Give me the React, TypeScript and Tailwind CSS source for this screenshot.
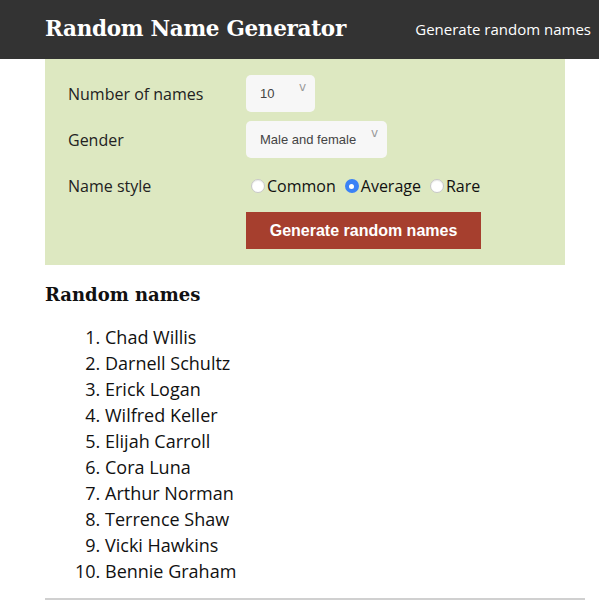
import React from 'react';

const NAMES = [
  'Chad Willis',
  'Darnell Schultz',
  'Erick Logan',
  'Wilfred Keller',
  'Elijah Carroll',
  'Cora Luna',
  'Arthur Norman',
  'Terrence Shaw',
  'Vicki Hawkins',
  'Bennie Graham',
];

const Select = ({ value, width }: { value: string; width: string }) => (
  <div className={`relative h-[37px] ${width} rounded-[5px] bg-[#f7f7f7] flex items-center pl-[14px] font-['Liberation_Sans',Arial,sans-serif] text-[13px] text-[#444]`}>
    {value}
    <span className="absolute right-[9px] top-[3px] text-[12px] text-[#999] font-['DejaVu_Sans',sans-serif]">v</span>
  </div>
);

const Radio = ({ label, checked }: { label: string; checked?: boolean }) => (
  <label className="flex items-center">
    <span
      className={`w-[14px] h-[14px] rounded-full mr-[2px] flex items-center justify-center ${
        checked ? 'bg-[#3b82f6]' : 'bg-white border border-[#c8c8c8] shadow-[inset_0_1px_1px_rgba(0,0,0,0.08)]'
      }`}
    >
      {checked && <span className="w-[5px] h-[5px] rounded-full bg-white" />}
    </span>
    <span>{label}</span>
  </label>
);

export default function App() {
  return (
    <div className="w-[599px] min-h-[604px] bg-white font-['Open_Sans',sans-serif] text-[#111]">
      {/* Header */}
      <header className="h-[59px] bg-[#333333] flex items-center">
        <h1 className="pl-[45px] font-['DejaVu_Serif',serif] font-bold text-[21.5px] text-white tracking-[-0.3px]">
          Random Name Generator
        </h1>
        <nav className="ml-auto pr-[8px] text-[15px] text-white">Generate random names</nav>
      </header>

      <main className="pl-[45px] w-[585px]">
        {/* Form panel */}
        <section className="w-[520px] bg-[#dde8c1] pl-[23px] pt-4 pb-[16px] text-[16px] text-[#222]">
          <div className="flex items-center">
            <span className="w-[178px]">Number of names</span>
            <Select value="10" width="w-[69px]" />
          </div>
          <div className="flex items-center mt-[9px]">
            <span className="w-[178px]">Gender</span>
            <Select value="Male and female" width="w-[141px]" />
          </div>
          <div className="flex items-center mt-[17px] h-[22px]">
            <span className="w-[183px]">Name style</span>
            <div className="flex items-center gap-[9px] text-[#111]">
              <Radio label="Common" />
              <Radio label="Average" checked />
              <Radio label="Rare" />
            </div>
          </div>
          <div className="flex mt-[15px]">
            <span className="w-[178px]" />
            <button className="w-[235px] h-[37px] bg-[#a63f2e] text-white font-['Liberation_Sans',Arial,sans-serif] font-bold text-[16px]">
              Generate random names
            </button>
          </div>
        </section>

        {/* Results */}
        <h2 className="mt-[16px] font-['DejaVu_Serif',serif] font-bold text-[18px] text-[#111]">Random names</h2>
        <ol className="mt-[16px] list-decimal pl-[60px] text-[18px] leading-[26px] text-[#111]">
          {NAMES.map((n) => (
            <li key={n}>{n}</li>
          ))}
        </ol>
        <hr className="mt-[14px] border-t-2 border-[#d0d0d0]" />
      </main>
    </div>
  );
}
